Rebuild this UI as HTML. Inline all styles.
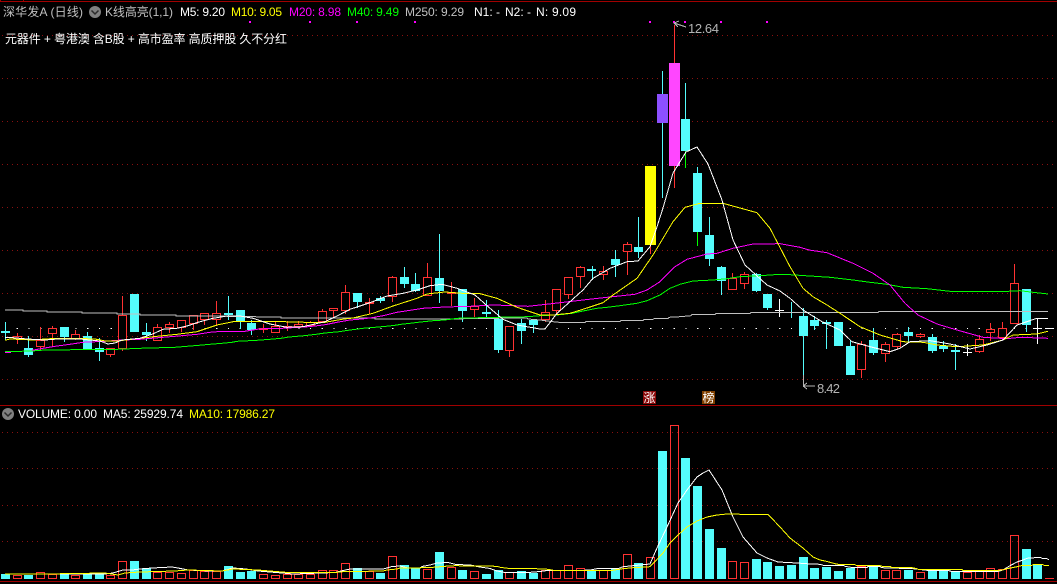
<!DOCTYPE html>
<html><head><meta charset="utf-8">
<style>
html,body{margin:0;padding:0;background:#000;width:1057px;height:584px;overflow:hidden}
svg{display:block}
text{font-family:"Liberation Sans","WenQuanYi Zen Hei","Noto Sans CJK SC",sans-serif;font-size:12px}
.g{stroke:#8a1010;stroke-width:1;stroke-dasharray:1 4;fill:none}
.l{fill:none;stroke-width:1;shape-rendering:crispEdges}
</style></head><body>
<svg width="1057" height="584" viewBox="0 0 1057 584" xmlns="http://www.w3.org/2000/svg">
<rect width="1057" height="584" fill="#000"/>
<!-- frame -->
<path d="M0 1.5H1057M0 405.5H1057M0 581.5H1057" stroke="#a00000" stroke-width="1" shape-rendering="crispEdges"/>
<path d="M23.5 0V2M0.5 0V2" stroke="#a00000" shape-rendering="crispEdges"/>
<!-- grid -->
<path class="g" shape-rendering="crispEdges" d="M2 35.5H1057M2 78.5H1057M2 121.5H1057M2 164.5H1057M2 207.5H1057M2 250.5H1057M2 293.5H1057M2 336.5H1057M2 379.5H1057M2 432.5H1057M2 468.5H1057M2 505.5H1057M2 541.5H1057"/>
<line x1="5" y1="328.5" x2="1057" y2="328.5" stroke="#fff" stroke-width="1" stroke-dasharray="1.2 10.53" shape-rendering="crispEdges"/>
<!-- magenta dots -->
<path fill="#ff00ff" d="M249 21h2v2h-2zM309 21h2v2h-2zM356 21h2v2h-2zM414 21h2v2h-2zM649 21h2v2h-2zM673 21h2v2h-2zM684 21h2v2h-2zM720 21h2v2h-2zM766 21h2v2h-2z"/>

<!-- cyan wicks -->
<path fill="none" stroke="#54fcfc" stroke-width="1" shape-rendering="crispEdges" d="M5.5 322V340M28.5 336V357M64.5 327V342M87.5 332V350M99.5 338V361M146.5 323V341M228.5 296V320M240.5 310V329M251.5 320V335M357.5 293V308M380.5 296V303M404.5 267V288M415.5 273V292M439.5 234V303M462.5 289V322M486.5 300V317M498.5 310V353M521.5 319V344M533.5 320V333M592.5 266V280M615.5 250V277M638.5 217V258M662.5 71V198M685.5 83V119M697.5 167V173M709.5 217V266M721.5 266V295M756.5 273V292M767.5 294V310M791.5 302V318M803.5 308V386M814.5 316V330M826.5 320V349M850.5 340V346M873.5 328V355M908.5 327V343M932.5 334V353M943.5 341V352M955.5 344V370M1026.5 289V332"/>
<path fill="none" stroke="#00ff00" stroke-width="1" shape-rendering="crispEdges" d="M685.5 151V168M697.5 232V246"/>
<!-- red wicks -->
<path fill="none" stroke="#ff3232" stroke-width="1" shape-rendering="crispEdges" d="M17.5 333V344M40.5 327V350M52.5 326V346M75.5 330V340M110.5 348V357M122.5 296V351M157.5 324V341M169.5 322V333M181.5 320V332M193.5 315V330M204.5 313V325M216.5 301V326M263.5 324V333M275.5 322V333M287.5 321V331M298.5 321V327M310.5 321V326M322.5 309V322M333.5 308V318M345.5 285V314M369.5 298V314M392.5 276V302M427.5 263V296M451.5 282V306M474.5 298V317M509.5 326V357M545.5 300V322M556.5 289V315M568.5 277V299M580.5 266V288M603.5 266V280M627.5 242V275M650.5 245V254M674.5 25V188M732.5 273V290M744.5 272V289M861.5 341V378M885.5 342V362M897.5 333V349M920.5 333V338M979.5 335V353M990.5 323V341M1002.5 322V340M1014.5 264V324"/>
<!-- cyan bodies -->
<path fill="#54fcfc" shape-rendering="crispEdges" d="M1 331H10V333H1ZM24 348H33V355H24ZM60 327H69V337H60ZM83 336H92V349H83ZM95 348H104V352H95ZM130 294H139V332H130ZM142 332H151V335H142ZM224 313H233V315H224ZM236 310H245V322H236ZM247 323H256V330H247ZM353 293H362V302H353ZM376 298H385V301H376ZM400 277H409V284H400ZM411 284H420V291H411ZM435 278H444V291H435ZM458 289H467V311H458ZM482 312H491V314H482ZM494 319H503V350H494ZM517 323H526V331H517ZM529 320H538V325H529ZM587 269H596V271H587ZM611 259H620V265H611ZM634 247H643V252H634ZM681 119H690V151H681ZM693 173H702V232H693ZM705 235H714V259H705ZM717 267H726V281H717ZM752 274H761V291H752ZM763 294H772V308H763ZM799 316H808V336H799ZM810 320H819V326H810ZM822 322H831V324H822ZM834 322H843V346H834ZM846 346H855V375H846ZM869 340H878V353H869ZM904 332H913V336H904ZM928 337H937V351H928ZM939 346H948V349H939ZM951 350H960V352H951ZM1022 289H1031V325H1022Z"/>
<!-- special bodies -->
<rect x="645" y="166" width="11" height="79" fill="#ffff00"/>
<rect x="657" y="94" width="11" height="29" fill="#8c50ff"/>
<rect x="669" y="63" width="11" height="103" fill="#ff46ff"/>
<!-- red bodies -->
<path fill="#000" stroke="#ff3232" stroke-width="1" shape-rendering="crispEdges" d="M13.5 336.5H21.5V338.5H13.5ZM36.5 340.5H44.5V346.5H36.5ZM48.5 328.5H56.5V333.5H48.5ZM71.5 334.5H79.5V338.5H71.5ZM106.5 348.5H114.5V354.5H106.5ZM118.5 315.5H126.5V348.5H118.5ZM153.5 327.5H161.5V340.5H153.5ZM165.5 324.5H173.5V327.5H165.5ZM177.5 320.5H185.5V327.5H177.5ZM189.5 315.5H197.5V323.5H189.5ZM200.5 313.5H208.5V319.5H200.5ZM212.5 313.5H220.5V319.5H212.5ZM259.5 328.5H267.5V329.5H259.5ZM271.5 326.5H279.5V332.5H271.5ZM283.5 326.5H291.5V327.5H283.5ZM294.5 324.5H302.5V326.5H294.5ZM306.5 322.5H314.5V325.5H306.5ZM318.5 311.5H326.5V321.5H318.5ZM329.5 308.5H337.5V310.5H329.5ZM341.5 292.5H349.5V310.5H341.5ZM365.5 302.5H373.5V303.5H365.5ZM388.5 277.5H396.5V296.5H388.5ZM423.5 277.5H431.5V295.5H423.5ZM447.5 292.5H455.5V293.5H447.5ZM470.5 306.5H478.5V309.5H470.5ZM505.5 326.5H513.5V350.5H505.5ZM541.5 312.5H549.5V319.5H541.5ZM552.5 289.5H560.5V310.5H552.5ZM564.5 277.5H572.5V294.5H564.5ZM576.5 267.5H584.5V276.5H576.5ZM599.5 271.5H607.5V274.5H599.5ZM623.5 244.5H631.5V251.5H623.5ZM728.5 278.5H736.5V289.5H728.5ZM740.5 274.5H748.5V283.5H740.5ZM857.5 344.5H865.5V369.5H857.5ZM881.5 344.5H889.5V353.5H881.5ZM892.5 334.5H900.5V346.5H892.5ZM916.5 334.5H924.5V336.5H916.5ZM975.5 339.5H983.5V351.5H975.5ZM986.5 329.5H994.5V332.5H986.5ZM998.5 328.5H1006.5V337.5H998.5ZM1010.5 283.5H1018.5V323.5H1010.5Z"/>
<!-- white doji -->
<path fill="none" stroke="#fff" stroke-width="1" shape-rendering="crispEdges" d="M779.5 299V317M775 310.5H784M967.5 344V356M963 352.5H972M1037.5 318V344M1033 328.5H1042M1045 328.5H1054"/>

<!-- MAs main -->
<polyline class="l" stroke="#c0c0c0" points="5,310 23,310 23,311 47,311 47,312 82,312 82,313 117,313 117,314 140,314 140,315 176,315 176,316 212,316 270,317 281,317 281,318 375,318 375,319 457,319 470,318.5 527,318 528,319 540,320 553,321.7 563,322.7 585,322.7 586,321.7 620,321.7 621,320.7 643,320.7 644,319.3 653,319.3 655,318.3 668,318.3 669,317.3 680,316.7 691,315.7 692,314.7 715,314.7 716,313.7 750,313.7 751,312.7 800,312.5 878,312.3 879,311.3 1048,311.3"/>
<polyline class="l" stroke="#00ff00" points="5,351.7 32,351 45,350 117,349.3 140,348.3 175,347.3 187,346.3 199,345.3 210,344.3 222,343.3 232,342.3 237,341.3 257,340.3 270,339.3 281,338.3 289,337 304,335.7 316,334.3 325,333 339,331.7 348,330.3 363,328.3 375,327.3 386,326.3 395,325.3 401,324.3 410,323.3 418,322.3 433,320.7 445,320 457,318.3 480,317.7 527,316.7 540,315.7 560,314.7 572,313.3 583,311 597,308.3 607,307.3 620,305.7 637,303.3 647,300.7 660,295 670,288.3 680,284.3 693,281 713,280 727,278.7 740,276.7 760,275.7 780,274.3 790,274.7 810,276 830,277.3 853,280 870,282.3 887,284.3 903,287.3 927,288.7 950,291.3 1008,291.3 1020,290.7 1033,292.3 1048,294"/>
<polyline class="l" stroke="#ff00ff" points="5,352.3 11,352.3"/>
<polyline class="l" stroke="#ff00ff" points="32,350.3 43,348.3 55,346.3 70,344.3 83,342.3 105,341.3 117,340.3 140,339.3 163,337.3 175,336.3 197,334.3 210,332.3 222,331.3 245,331.3 257,329.3 270,328.3 282,328.3 305,327 315,326 325,324.7 337,322.3 350,320 362,319 372,317.7 383,315.7 397,312.3 410,310.3 423,308.3 445,307 470,306.3 493,305 515,305.7 528,306.3 540,305 560,302.7 583,300 607,297.3 635,294.3 647,290 660,281.7 675,266.7 687,259.3 707,254 717,253.3 733,248.3 753,244 780,243.7 800,247.3 809,250 827,252.7 853,263.3 873,273.3 890,285 905,303.3 918,315 937,324 957,330 983,337.3 1007,338.7 1020,337.3 1048,338.3"/>
<polyline class="l" stroke="#ffff00" points="5,340.3 10,339 33,340 45,339 58,338.3 80,338.3 97,339.3 105,341 117,341 140,338.3 157,336.3 177,334.3 197,331.7 217,325 233,321.7 247,321.7 270,321.3 305,322.3 325,322.3 342,319.3 353,318 373,313.3 393,306 417,298.3 427,294 445,292 462,293.3 480,293.7 497,298.3 517,307.3 540,315 553,315 570,313.3 583,309.3 603,302.7 613,295 637,278.3 653,255 673,221.7 685,207.3 700,203.3 723,203.3 757,212.7 770,228.3 783,253.3 790,266.7 803,288.3 813,296.7 827,305 840,313.3 860,326.7 880,335 903,341.7 923,342.3 937,345 957,346.7 983,345 1003,340 1013,335 1037,334 1048,331.3"/>
<polyline class="l" stroke="#ffffff" points="5,337.7 13,337.7 27,339 45,340 58,339 80,339 100,341 108,344 115,343 122,340 140,338.3 152,334.3 163,329.3 177,328.3 187,326 200,321.7 213,318.3 227,316 240,316 253,318.3 270,324 287,327.3 303,326.7 325,321.7 337,316 350,309.3 370,302.7 387,296 403,293.3 417,290 430,285.7 442,284.3 457,288.3 475,295 490,308.3 503,319.3 517,325 540,329 545,329 557,313.3 570,301.7 583,290 593,278.3 610,268.3 627,261.7 638,261 650,246.7 657,226.7 663,208 673,173 686,152 697,147 708,164 722,200 733,240 745,265 767,285 780,291 790,298.3 803,310 822,321.7 840,330 852,341.7 870,346.7 890,351.7 900,348.3 910,341.7 930,340.7 950,344 970,349 987,345 1003,340 1017,325 1037,318.3 1048,318.3"/>

<!-- volume cyan -->
<path fill="#54fcfc" shape-rendering="crispEdges" d="M1 574H10V579H1ZM24 575H33V579H24ZM60 573H69V579H60ZM83 574H92V579H83ZM95 574H104V579H95ZM130 561H139V579H130ZM142 568H151V579H142ZM224 566H233V579H224ZM236 572H245V579H236ZM247 571H256V579H247ZM353 568H362V579H353ZM376 573H385V579H376ZM400 565H409V579H400ZM411 568H420V579H411ZM435 552H444V579H435ZM458 570H467V579H458ZM482 574H491V579H482ZM494 570H503V579H494ZM517 571H526V579H517ZM529 573H538V579H529ZM587 570H596V579H587ZM611 569H620V579H611ZM634 563H643V579H634ZM658 451H667V579H658ZM681 458H690V579H681ZM693 486H702V579H693ZM705 529H714V579H705ZM717 548H726V579H717ZM752 559H761V579H752ZM763 562H772V579H763ZM775 566H784V579H775ZM787 565H796V579H787ZM799 557H808V579H799ZM810 568H819V579H810ZM822 567H831V579H822ZM834 571H843V579H834ZM846 568H855V579H846ZM869 565H878V579H869ZM904 570H913V579H904ZM928 570H937V579H928ZM939 570H948V579H939ZM951 572H960V579H951ZM1022 549H1031V579H1022ZM1033 565H1042V579H1033Z"/>
<!-- volume red -->
<path fill="none" stroke="#ff3232" stroke-width="1" shape-rendering="crispEdges" d="M13.5 575.5H21.5V578.5H13.5ZM36.5 572.5H44.5V578.5H36.5ZM48.5 574.5H56.5V578.5H48.5ZM71.5 575.5H79.5V578.5H71.5ZM106.5 575.5H114.5V578.5H106.5ZM118.5 561.5H126.5V578.5H118.5ZM153.5 572.5H161.5V578.5H153.5ZM165.5 572.5H173.5V578.5H165.5ZM177.5 573.5H185.5V578.5H177.5ZM189.5 570.5H197.5V578.5H189.5ZM200.5 571.5H208.5V578.5H200.5ZM212.5 571.5H220.5V578.5H212.5ZM259.5 574.5H267.5V578.5H259.5ZM271.5 575.5H279.5V578.5H271.5ZM283.5 574.5H291.5V578.5H283.5ZM294.5 574.5H302.5V578.5H294.5ZM306.5 574.5H314.5V578.5H306.5ZM318.5 570.5H326.5V578.5H318.5ZM329.5 570.5H337.5V578.5H329.5ZM341.5 563.5H349.5V578.5H341.5ZM365.5 571.5H373.5V578.5H365.5ZM388.5 556.5H396.5V578.5H388.5ZM423.5 569.5H431.5V578.5H423.5ZM447.5 567.5H455.5V578.5H447.5ZM470.5 571.5H478.5V578.5H470.5ZM505.5 572.5H513.5V578.5H505.5ZM541.5 570.5H549.5V578.5H541.5ZM552.5 570.5H560.5V578.5H552.5ZM564.5 565.5H572.5V578.5H564.5ZM576.5 568.5H584.5V578.5H576.5ZM599.5 570.5H607.5V578.5H599.5ZM623.5 554.5H631.5V578.5H623.5ZM646.5 557.5H654.5V578.5H646.5ZM670.5 425.5H678.5V578.5H670.5ZM728.5 561.5H736.5V578.5H728.5ZM740.5 562.5H748.5V578.5H740.5ZM857.5 566.5H865.5V578.5H857.5ZM881.5 570.5H889.5V578.5H881.5ZM892.5 570.5H900.5V578.5H892.5ZM916.5 572.5H924.5V578.5H916.5ZM963.5 572.5H971.5V578.5H963.5ZM975.5 571.5H983.5V578.5H975.5ZM986.5 568.5H994.5V578.5H986.5ZM998.5 569.5H1006.5V578.5H998.5ZM1010.5 535.5H1018.5V578.5H1010.5ZM1045 578.5H1054"/>
<!-- volume MA -->
<polyline class="l" stroke="#ffffff" points="5,574 105,574 113,573 123,570 132,570 140,569 152,568 172,567 178,568 188,570 210,571 222,571 233,568 246,569 258,571 270,572 282,573 293,574 335,572.5 339,571.5 350,569 383,569 387,568 392,566.5 400,566 408,568 420,568 422,566.5 430,565 437,563 448,562.5 456,564.5 470,565 480,567 490,568.5 497,571 505,572.5 528,572.5 540,571.5 547,570.5 580,570.5 590,570 597,568.7 618,568.7 623,566.7 633,565.7 650,564 657,548 667,527 678,503 687,490 697,477 703,473 709,470 722,490 733,517 743,537 757,553 767,558 778,562 797,563 810,564 820,564.3 823,565.3 843,565.3 845,566.3 853,567.7 867,567.7 868,566.7 880,566.7 882,567.7 913,568.7 927,570.3 948,570.3 952,571.7 997,571.7 1003,570 1010,565.7 1017,562 1023,560 1027,558.3 1040,557.3 1042,558.3 1047,558.7 1049,559.7"/>
<polyline class="l" stroke="#ffff00" points="5,574 45,574 105,573 118,575 125,573 140,572 175,571 188,570 222,571 233,569 258,570 282,572 290,572.7 333,572.7 343,571.7 383,571 387,570 397,569 400,568 420,568 422,567.3 433,567.3 445,566.3 455,565.7 497,566.3 500,567.3 508,568.3 528,568.3 548,569.3 553,570.3 590,570.7 610,570.7 623,568.7 633,567.7 650,566.7 663,553 670,543 678,535 687,527 697,521 707,517 717,515 727,514 738,514 740,514.3 768,514.3 780,527 790,538 803,548 813,557 820,560 825,561 830,562.3 835,563.7 840,564.7 855,564.7 857,565.7 880,565.7 882,566.3 890,566.3 892,567.7 912,567.7 917,568.7 919,569.7 962,569.7 963,570.7 995,570.7 1002,570 1007,568.7 1012,567.7 1017,566.7 1023,565.3 1032,565.3 1033,564.7 1043,564.7 1045,565.7 1049,565.7"/>

<!-- arrows -->
<path fill="none" stroke="#b4b4b4" stroke-width="1" d="M674 23L686 27M674 23L679 21M674 23L678 27M803 386H815M803 386L807 383M803 386L807 389M803.5 375V386" shape-rendering="crispEdges"/>
<text x="688" y="33" fill="#b4b4b4" style="font-size:13px" textLength="31" lengthAdjust="spacing">12.64</text>
<text x="817" y="393" fill="#b4b4b4" style="font-size:13px" textLength="23" lengthAdjust="spacing">8.42</text>

<!-- badges -->
<rect x="643" y="391" width="13" height="13" fill="#8b0a0a"/>
<text x="643.5" y="402" fill="#fff">涨</text>
<rect x="702" y="391" width="13" height="13" fill="#804000"/>
<text x="702.5" y="402" fill="#fff">榜</text>

<!-- header -->
<text x="3" y="16" fill="#c0c0c0" textLength="80" lengthAdjust="spacing">深华发A (日线)</text>
<circle cx="95" cy="12" r="6" fill="#808080"/>
<path d="M91.5 10.5L95 14L98.5 10.5" fill="none" stroke="#2a2a2a" stroke-width="1.5"/>
<text x="105" y="16" fill="#c0c0c0" textLength="68" lengthAdjust="spacing">K线高亮(1,1)</text>
<text x="180" y="16" fill="#ffffff" textLength="45" lengthAdjust="spacing">M5: 9.20</text>
<text x="231" y="16" fill="#ffff00" textLength="51" lengthAdjust="spacing">M10: 9.05</text>
<text x="289" y="16" fill="#ff00ff" textLength="52" lengthAdjust="spacing">M20: 8.98</text>
<text x="347" y="16" fill="#00ff00" textLength="52" lengthAdjust="spacing">M40: 9.49</text>
<text x="405" y="16" fill="#c0c0c0" textLength="59" lengthAdjust="spacing">M250: 9.29</text>
<text x="474" y="16" fill="#ffffff">N1: -</text>
<text x="505" y="16" fill="#ffffff">N2: -</text>
<text x="536" y="16" fill="#ffffff" textLength="40" lengthAdjust="spacing">N: 9.09</text>
<text x="5" y="43" fill="#ffffff" textLength="282" lengthAdjust="spacing">元器件 + 粤港澳 含B股 + 高市盈率 高质押股 久不分红</text>

<circle cx="8" cy="414" r="6" fill="#808080"/>
<path d="M4.5 412.5L8 416L11.5 412.5" fill="none" stroke="#2a2a2a" stroke-width="1.5"/>
<text x="18" y="418" fill="#ffffff" textLength="79" lengthAdjust="spacing">VOLUME: 0.00</text>
<text x="103" y="418" fill="#ffffff" textLength="80" lengthAdjust="spacing">MA5: 25929.74</text>
<text x="189" y="418" fill="#ffff00" textLength="86" lengthAdjust="spacing">MA10: 17986.27</text>
</svg>
</body></html>
